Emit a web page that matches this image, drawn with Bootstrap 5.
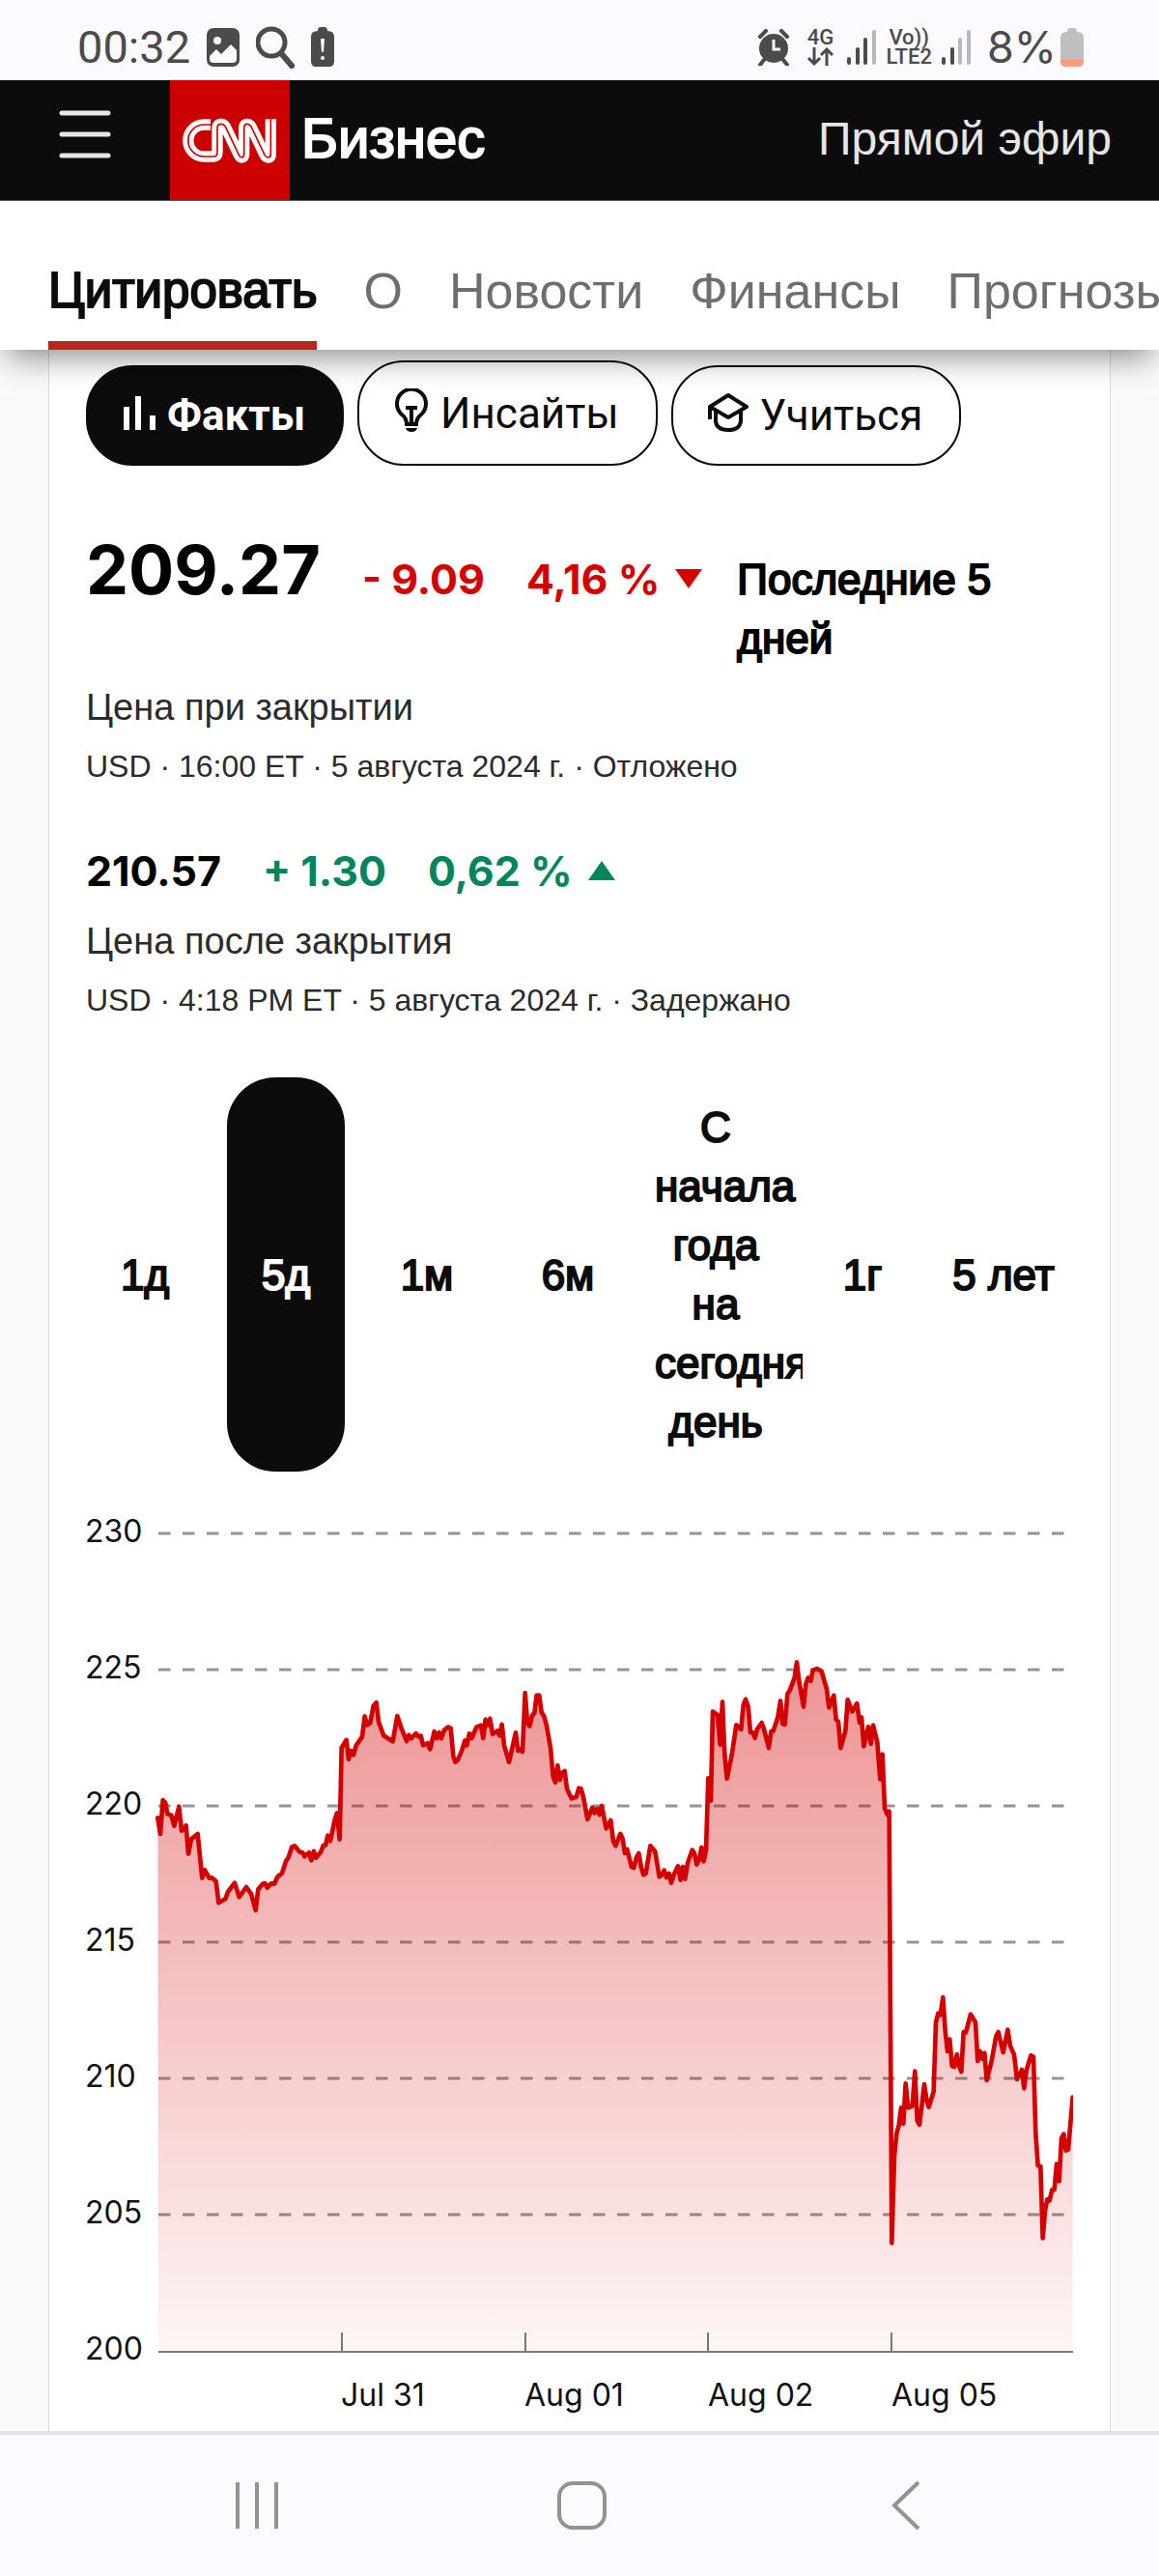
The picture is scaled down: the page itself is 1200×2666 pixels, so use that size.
<!DOCTYPE html>
<html lang="ru">
<head>
<meta charset="utf-8">
<meta name="viewport" content="width=device-width, initial-scale=1">
<title>CNN Бизнес</title>
<link href="https://cdn.jsdelivr.net/npm/bootstrap@5.3.0/dist/css/bootstrap.min.css" rel="stylesheet">
<style>
  :root { --ink: #0c0c0c; --cnn-red: #cc0000; --up: #00855d; --system: #fafaff; }
  body { background: #f9f9f9; color: #000; font-family: "Liberation Sans", Arial, sans-serif; min-height: 100vh; }
  svg { display: block; flex: none; }
  a { text-decoration: none; }
  .heavy { -webkit-text-stroke: 2px currentColor; font-weight: 400; }

  .phone-status { height: 83px; padding: 14px 78px 0 80px; background: var(--system); color: #4b4b4b; font-family: Roboto, sans-serif; font-size: 47px; line-height: 68px; }
  .phone-status .percent { font-family: Inter, sans-serif; font-size: 45px; margin-left: 16px; }
  .net-label { font-size: 22px; line-height: 20px; font-weight: 500; margin: 0 9px; }

  .site-bar { height: 125px; background: var(--ink); padding-right: 49px; border-bottom: 1px solid #555; }
  .menu-btn { width: 176px; padding: 0 61px 12px; background: none; border: 0; }
  .logo-tile { width: 124px; height: 124px; background: var(--cnn-red); }
  .brand-name { color: #fff; font-size: 58px; margin-left: 12px; line-height: 80px; padding-bottom: 4px; }
  .live-link { color: #e6e6e6; font-size: 48px; line-height: 80px; padding-bottom: 2px; }

  .sub-nav { background: #fff; padding: 63px 0 0 50px; gap: 48px; position: relative; z-index: 2; box-shadow: 0 16px 30px -8px rgba(0,0,0,.44); clip-path: inset(0 0 -80px 0); }
  .sub-nav a { color: #6e6e6e; font-size: 52px; line-height: 60px; padding-bottom: 22px; border-bottom: 9px solid transparent; white-space: nowrap; }
  .sub-nav a.active { color: var(--ink); font-size: 51px; border-color: #b9261d; }

  .quote { margin: 0 50px; padding: 11px 38px 0; background: #fff; border: solid #dcdcdc; border-width: 0 1px; }
  .chips { gap: 14px; }
  .chip { height: 104px; border-radius: 48px; border: 2px solid var(--ink); background: #fff; color: var(--ink); font-family: Roboto, sans-serif; font-size: 44px; line-height: 60px; padding: 0 38px 0 36px; gap: 12px; }
  .chip.tall { height: 109px; }
  .chip svg { margin-bottom: 6px; }
  .chip.active { background: var(--ink); color: #fff; font-weight: 700; gap: 10px; }
  .chip.active svg { margin-bottom: 4px; }

  .figures { font-family: Inter, sans-serif; font-weight: 700; font-size: 43px; line-height: 56px; gap: 43px; }
  .figures .big { font-size: 70px; line-height: 80px; }
  .price-row { margin-top: 68px; }
  .after-row { margin-top: 58px; margin-bottom: 20px; }
  .down { color: #d40000; }
  .up { color: var(--up); }
  .figures .span-name { font-family: "Liberation Sans", Arial, sans-serif; font-size: 44px; line-height: 61px; margin-left: -7px; }
  .caption { font-size: 38px; line-height: 50px; color: #2b2b2b; margin: 0 0 14px; }
  .stamp { font-size: 32px; line-height: 44px; color: #2b2b2b; margin: 0; }

  .ranges { margin-top: 58px; gap: 24px; padding-right: 11px; }
  .ranges button { flex: none; width: 122px; padding: 21px 0; border: 0; background: none; border-radius: 50px; color: var(--ink); font-size: 44px; line-height: 61px; white-space: nowrap; }
  .ranges button.active { background: var(--ink); color: #fff; }
  .ranges .ytd { flex: 1 1 0; min-width: 0; width: auto; }
  .ytd .words { display: flex; flex-direction: column; width: 153px; margin-left: 5px; overflow: hidden; }
  .ytd .words span { width: 126px; }
  .ytd .words .wide { text-align: left; }

  .chart { width: 100%; height: auto; margin-top: 35px; }
  .chart text { font-family: Inter, sans-serif; font-size: 32px; fill: #111; }

  .phone-nav { height: 150px; background: var(--system); border-top: 4px solid #e2e2ea; padding: 0 238px 1px 242px; }
  .phone-nav button { background: none; border: 0; padding: 0; }
</style>
<script src="https://cdn.jsdelivr.net/npm/bootstrap@5.3.0/dist/js/bootstrap.bundle.min.js"></script>
</head>
<body class="d-flex flex-column overflow-x-hidden">

<div class="phone-status d-flex align-items-center">
  <span>00:32</span>
  <svg class="ms-3" width="36" height="40" viewBox="0 0 36 40"><rect x="1" width="34" height="40" rx="7" fill="#4b4b4b"/><circle cx="12" cy="13" r="4" fill="#fafaff"/><path d="M4 29l7-7 5 5 10-10 6 6v9q0 4-4 4H8q-4 0-4-4z" fill="#fafaff"/></svg>
  <svg class="ms-3" width="40" height="44" viewBox="0 0 40 44" fill="none" stroke="#4b4b4b"><circle cx="16" cy="17" r="14" stroke-width="5"/><path d="M26 28l11 13" stroke-width="6" stroke-linecap="round"/></svg>
  <svg class="ms-3" width="26" height="42" viewBox="0 0 26 42"><path d="M8 4q0-4 3-4h4q3 0 3 4 7 0 7 6v25q0 6-5 6H6q-5 0-5-6V10q0-6 7-6z" fill="#4b4b4b"/><path d="M11 12h4l-1 14h-2z" fill="#fafaff"/><circle cx="13" cy="32" r="2" fill="#fafaff"/></svg>
  <div class="d-flex align-items-center ms-auto">
    <svg class="me-2" width="34" height="38" viewBox="0 0 34 38"><circle cx="17" cy="20" r="15" fill="#4b4b4b"/><path d="M3 8l6-6M31 8l-6-6M7 32l-4 5M27 32l4 5" stroke="#4b4b4b" stroke-width="4" stroke-linecap="round"/><path d="M17 11v10h7" stroke="#fafaff" stroke-width="3" fill="none"/></svg>
    <div class="net-label text-center">4G
      <svg width="28" height="19" viewBox="0 0 28 19" fill="none" stroke="#4b4b4b" stroke-width="3"><path d="M8 0v17M2 11l6 6 6-6M21 19V2M15 8l6-6 6 6"/></svg>
    </div>
    <svg class="ms-1" width="32" height="38" viewBox="0 0 32 38" stroke-width="4" stroke-linecap="round"><path d="M3 31v4M12 21v14M20 11v24" stroke="#4b4b4b"/><path d="M29 3v32" stroke="#b8b8bb"/></svg>
    <div class="net-label text-center"><div>Vo))</div><div>LTE2</div></div>
    <svg width="32" height="38" viewBox="0 0 32 38" stroke-width="4" stroke-linecap="round"><path d="M3 31v4M12 21v14" stroke="#4b4b4b"/><path d="M20 11v24M29 3v32" stroke="#b8b8bb"/></svg>
    <span class="percent">8%</span>
    <svg class="ms-1" width="24" height="40" viewBox="0 0 24 40"><path d="M7 4q0-4 3-4h4q3 0 3 4 7 0 7 6v24H0V10q0-6 7-6z" fill="#bfbfbf"/><path d="M0 33h24v2q0 5-5 5H5q-5 0-5-5z" fill="#fb9b7d"/></svg>
  </div>
</div>

<header class="site-bar d-flex align-items-center">
  <button class="menu-btn" type="button" aria-label="Меню">
    <svg width="54" height="50" viewBox="0 0 54 50" stroke="#e6e6e6" stroke-width="5" stroke-linecap="round"><path d="M3 3h48M3 25h48M3 47h48"/></svg>
  </button>
  <a class="logo-tile" href="#" aria-label="CNN">
    <svg width="124" height="124" viewBox="0 0 372 372" fill="none">
      <g transform="translate(-18 51)">
        <path d="M144 87H124A49 49 0 0 0 124 186H154Q165 186 165 174V98Q165 85 176 85Q185 85 190 93L232 181Q236 189 241 189Q248 189 248 178V98Q248 85 257 85Q265 85 270 93L312 181Q317 189 323 189Q331 189 331 178V70" stroke="#fff" stroke-width="34"/>
        <path d="M144 87H124A49 49 0 0 0 124 186H154Q165 186 165 174V98Q165 85 176 85Q185 85 190 93L232 181Q236 189 241 189Q248 189 248 178V98Q248 85 257 85Q265 85 270 93L312 181Q317 189 323 189Q331 189 331 178V70" stroke="#cc0000" stroke-width="5"/>
      </g>
    </svg>
  </a>
  <a class="brand-name heavy" href="#">Бизнес</a>
  <a class="live-link ms-auto" href="#">Прямой эфир</a>
</header>

<nav class="sub-nav d-flex">
  <a class="active heavy" href="#" aria-current="page">Цитировать</a>
  <a href="#">О</a>
  <a href="#">Новости</a>
  <a href="#">Финансы</a>
  <a href="#">Прогнозы</a>
</nav>

<main class="quote flex-grow-1">
  <div class="chips d-flex align-items-end">
    <button class="chip active d-flex align-items-center" type="button">
      <svg width="36" height="36" viewBox="0 0 36 36" fill="#fff"><path d="M1 11h6v24H1zM13 0h6v35h-6zM28 20h6v15h-6z"/></svg>Факты
    </button>
    <button class="chip tall d-flex align-items-center" type="button">
      <svg width="36" height="46" viewBox="0 0 36 46" fill="none" stroke="#0c0c0c" stroke-width="4"><path d="M13 37h10q0-6 5-10a15 15 0 1 0-20 0q5 4 5 10z"/><path d="M12 20h12M18 21v15"/><path d="M12 41h12q-1 4-6 4t-6-4z" fill="#0c0c0c" stroke="none"/></svg>Инсайты
    </button>
    <button class="chip d-flex align-items-center" type="button">
      <svg width="42" height="40" viewBox="0 0 42 40" fill="none" stroke="#0c0c0c" stroke-width="4" stroke-linejoin="round"><path d="M2 14L21 2l19 12-19 11zM2 14v13M8 19v10q1 9 13 9t13-9V19"/></svg>Учиться
    </button>
  </div>

  <div class="figures price-row d-flex align-items-baseline">
    <span class="big">209.27</span>
    <span class="down text-nowrap">- 9.09</span>
    <span class="down text-nowrap d-flex align-items-center">4,16 %<svg class="ms-3" width="28" height="20" viewBox="0 0 28 20"><path d="M0 0h28L14 20z" fill="#d40000"/></svg></span>
    <span class="span-name heavy flex-grow-1">Последние 5 дней</span>
  </div>
  <p class="caption mt-3">Цена при закрытии</p>
  <p class="stamp">USD · 16:00 ET · 5 августа 2024 г. · Отложено</p>

  <div class="figures after-row d-flex align-items-baseline">
    <span>210.57</span>
    <span class="up">+ 1.30</span>
    <span class="up d-flex align-items-center">0,62 %<svg class="ms-3" width="28" height="20" viewBox="0 0 28 20"><path d="M0 20h28L14 0z" fill="#00855d"/></svg></span>
  </div>
  <p class="caption">Цена после закрытия</p>
  <p class="stamp">USD · 4:18 PM ET · 5 августа 2024 г. · Задержано</p>

  <div class="ranges d-flex align-items-stretch">
    <button type="button" class="heavy">1д</button>
    <button type="button" class="active heavy">5д</button>
    <button type="button" class="heavy">1м</button>
    <button type="button" class="heavy">6м</button>
    <button type="button" class="ytd heavy"><span class="words"><span>С</span><span class="wide">начала</span><span>года</span><span>на</span><span class="wide">сегодня</span><span>день</span></span></button>
    <button type="button" class="heavy">1г</button>
    <button type="button" class="heavy">5 лет</button>
  </div>

  <svg class="chart" viewBox="0 0 1022 956" role="img" aria-label="График цены за 5 дней">
    <defs><linearGradient id="fade" x1="0" y1="0" x2="0" y2="1"><stop offset="0" stop-color="#d40000" stop-opacity=".42"/><stop offset="1" stop-color="#d40000" stop-opacity=".04"/></linearGradient></defs>
    <path d="M75 29H1014M75 170H1014M75 311H1014M75 452H1014M75 593H1014M75 734H1014" stroke="#949494" stroke-width="3" stroke-dasharray="12.5 12.5"/>
    <g transform="translate(-29 -20) scale(.33333)">
      <path id="area" fill="url(#fade)"/>
      <path id="trace" fill="none" stroke="#d40000" stroke-width="14" stroke-linejoin="round" stroke-linecap="round"/>
    </g>
    <path d="M265 856v20M455 856v20M644 856v20M834 856v20" stroke="#777" stroke-width="2"/>
    <path d="M75 876H1022" stroke="#7c7c7c" stroke-width="2"/>
    <text x="-1" y="38">230</text><text x="-1" y="179">225</text><text x="-1" y="320">220</text><text x="-1" y="461">215</text><text x="-1" y="602">210</text><text x="-1" y="743">205</text><text x="-1" y="884">200</text>
    <text x="264" y="932">Jul 31</text><text x="454" y="932">Aug 01</text><text x="644" y="932">Aug 02</text><text x="834" y="932">Aug 05</text>
  </svg>
</main>

<div class="phone-nav d-flex align-items-center justify-content-between">
  <button type="button" aria-label="Недавние"><svg width="50" height="52" viewBox="0 0 50 52" stroke="#929292" stroke-width="4"><path d="M4 2v48M24 2v48M44 2v48"/></svg></button>
  <button type="button" aria-label="Домой"><svg width="54" height="52" viewBox="0 0 54 52"><rect x="4" y="3" width="47" height="46" rx="14" fill="none" stroke="#929292" stroke-width="4"/></svg></button>
  <button type="button" aria-label="Назад"><svg width="50" height="52" viewBox="0 0 50 52" fill="none" stroke="#929292" stroke-width="4"><path d="M39 2L14 26l25 24"/></svg></button>
</div>

<script>
  // One list of x,y points per trading day
  const days = [
    "310,1030 318,1080 326,975 334,985 340,1018 352,1022 361,1055 376,995 384,1070 398,1054 405,1142 414,1096 434,1080 448,1217 456,1192 470,1217 478,1216 491,1227 499,1294 520,1282 528,1260 549,1232 563,1276 585,1245 600,1266 614,1317 622,1252 636,1235 643,1233 650,1247 662,1234 672,1235 682,1213 696,1202 708,1165 716,1153 727,1120 735,1117 752,1137 760,1138 766,1150 780,1138 787,1162 795,1134 802,1154 817,1135 824,1116 831,1116 838,1085 846,1102 860,1035 867,1015 875,1097",
    "881,812 896,788 903,848 910,822 918,835 926,806 945,778 953,715 960,742 970,735 980,682 989,672 996,732 1012,775 1040,793 1054,714 1068,755 1083,792 1090,773 1097,784 1112,768 1120,778 1127,775 1134,805 1148,798 1156,817 1169,762 1177,783 1184,765 1191,783 1200,757 1212,748 1220,752 1228,838 1234,857 1242,850 1255,820 1264,790 1270,805 1278,768 1285,783 1300,748 1314,743 1321,783 1328,725 1336,742 1342,722 1350,770 1365,760 1372,775 1379,740 1386,805 1401,857 1422,765 1429,822 1437,815 1443,825",
    "1451,642 1458,735 1465,745 1473,712 1480,705 1487,650 1495,650 1502,702 1510,715 1517,740 1530,812 1538,902 1545,920 1552,867 1559,912 1566,890 1574,885 1581,940 1595,970 1610,965 1618,938 1625,940 1632,965 1645,1035 1660,998 1667,1015 1675,1002 1682,1020 1689,993 1703,1063 1717,1038 1725,1103 1732,1117 1747,1080 1754,1095 1761,1140 1768,1128 1782,1183 1789,1185 1796,1155 1804,1140 1812,1185 1819,1207 1826,1203 1840,1117 1855,1135 1868,1213 1876,1207 1883,1193 1890,1215 1898,1203 1905,1232 1913,1207 1926,1180 1934,1223 1941,1182 1948,1220 1956,1170 1970,1130 1977,1140 1984,1175 1992,1160 1999,1122 2006,1165 2013,1130",
    "2020,907 2028,977 2034,700 2049,710 2057,803 2064,670 2071,835 2078,908 2093,835 2107,742 2122,755 2129,680 2136,662 2144,685 2151,765 2158,765 2165,782 2172,755 2186,735 2193,755 2208,813 2215,762 2222,760 2236,718 2244,667 2251,738 2258,740 2266,645 2273,635 2288,595 2295,547 2302,605 2316,685 2323,615 2330,595 2338,605 2345,572 2358,567 2372,575 2382,610 2388,630 2395,688 2410,650 2417,725 2424,732 2431,813 2446,760 2453,663 2467,700 2482,675 2490,735 2496,718 2503,808 2517,747 2525,800 2532,743 2545,795 2554,910 2561,833 2568,1000 2576,1020 2582,1010",
    "2590,2350 2598,2080 2605,2010 2612,1985 2619,1930 2626,1980 2633,1855 2641,1930 2654,1925 2662,1817 2669,1970 2676,1983 2691,1857 2698,1905 2705,1928 2720,1880 2727,1665 2734,1637 2741,1642 2749,1587 2756,1690 2763,1755 2770,1718 2777,1800 2784,1803 2792,1765 2799,1800 2806,1818 2813,1695 2820,1697 2835,1640 2850,1665 2857,1785 2864,1755 2871,1778 2878,1760 2885,1845 2900,1785 2914,1708 2921,1695 2928,1725 2936,1758 2950,1688 2958,1738 2970,1765 2979,1842 2994,1812 3001,1870 3008,1815 3022,1768 3030,1772 3037,2010 3044,2110 3052,2112 3059,2335 3066,2250 3073,2215 3080,2218 3088,2185 3095,2185 3102,2105 3110,2158 3117,2025 3124,2012 3131,2063 3138,2060 3152,1898"
  ];
  const line = "M" + days.join(" ").split(" ").join("L");
  document.getElementById("trace").setAttribute("d", line);
  document.getElementById("area").setAttribute("d", line + "V2688H312Z");
</script>
</body>
</html>
